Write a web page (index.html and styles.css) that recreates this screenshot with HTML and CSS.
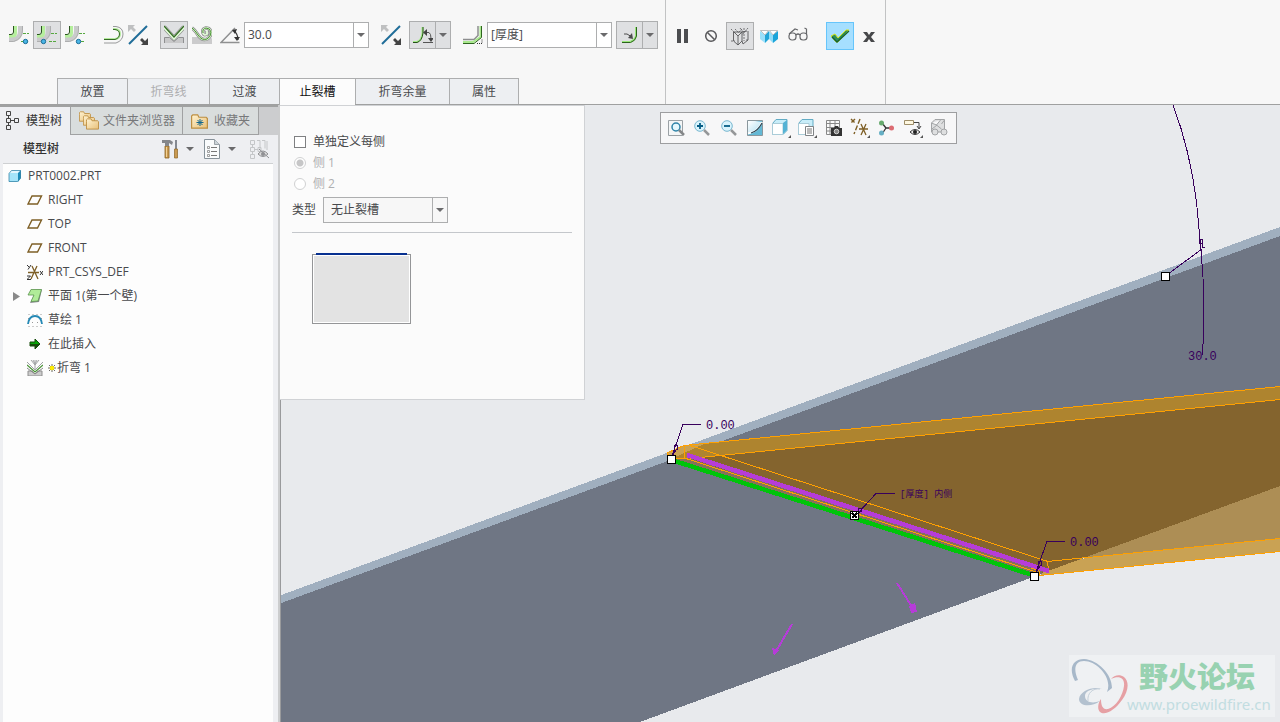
FILE: index.html
```html
<!DOCTYPE html>
<html lang="zh-CN">
<head>
<meta charset="utf-8">
<meta name="viewport" content="width=device-width, initial-scale=1">
<title>PRT0002.PRT</title>
<link rel="stylesheet" href="styles.css">
</head>
<body>
<svg class="defs" aria-hidden="true">
  <defs>
    <linearGradient id="gold" x1="0" y1="0" x2="1" y2="1"><stop offset="0" stop-color="#fff3d2"/><stop offset="1" stop-color="#e8c079"/></linearGradient>
    <linearGradient id="glass" x1="0" y1="0" x2="1" y2="1"><stop offset="0" stop-color="#fff"/><stop offset="1" stop-color="#a8dcf0"/></linearGradient>
    <symbol id="caret" viewBox="0 0 8 4"><path d="M0 0h8L4 4z" fill="#6a6a6c"/></symbol>
    <symbol id="bend" viewBox="0 0 20 20">
      <path d="M9 1h5v4q0 9-9 12H0v-5h3q6 0 6-6z" fill="#c9cacb"/>
      <path d="M13.500 1v4q0 9-9 11.500H0" fill="none" stroke="#adaeaf"/>
      <path d="M6.500 1v7q0 3-3 3H0" fill="none" stroke="#b5ef9c" stroke-width="3"/>
      <path d="M4.500 1v6q0 2.500-2.500 2.500H0" fill="none" stroke="#2c5420"/>
      <path d="M14 8.500h6M12 16.500h8" stroke="#57a840" stroke-dasharray="3 1"/>
    </symbol>
    <symbol id="flip" viewBox="0 0 20 20">
      <path d="M1 19 19 1" stroke="#1f6d98" stroke-width="2"/>
      <path d="M0 0h7L5 2l3 3-2 2-3-3-3 3z" fill="#bfc0c1"/>
      <path d="M20 20h-7l2-2-3-3 2-2 3 3 3-3z" fill="#444"/>
    </symbol>
    <symbol id="plane" viewBox="0 0 16 16"><path d="M5 4h9.500l-4 8H1z" fill="none" stroke="#7e5f26" stroke-width="1.400"/></symbol>
    <symbol id="folder" viewBox="0 0 14 12"><path d="M.5 3.500v-2l1-1h4l1 2h6l1 1v8H.5z" fill="url(#gold)" stroke="#bd8f42"/></symbol>
  </defs>
</svg>
<div class="app">
  <header class="ribbon">
    <section class="ribbon-main">
      <div class="tools">
        <button class="tool" aria-label="外侧折弯"><svg class="i20"><use href="#bend"/><circle cx="16.500" cy="16.500" r="2.200" fill="#4ab5e6" stroke="#1b6d97"/></svg></button>
        <button class="tool on" aria-label="中间折弯"><svg class="i20"><use href="#bend"/><circle cx="6.500" cy="16.500" r="2.200" fill="#4ab5e6" stroke="#1b6d97"/></svg></button>
        <button class="tool" aria-label="内侧折弯"><svg class="i20"><use href="#bend"/><circle cx="13.500" cy="16.500" r="2.200" fill="#4ab5e6" stroke="#1b6d97"/></svg></button>
        <button class="tool group" aria-label="固定侧"><svg class="i20" viewBox="0 0 20 20"><path d="M9 1.500h3q7 1 7 7.500t-7 9H0" fill="none" stroke="#98999a"/><path d="M9 4h2q5 .5 5 5t-5 5H0" fill="none" stroke="#b4eb9c" stroke-width="2"/><path d="M9 4.500h2q4.500 .5 4.500 4.500t-4.500 5.500H0" fill="none" stroke="#356a25"/></svg></button>
        <button class="tool tight" aria-label="更改固定侧"><svg class="i20"><use href="#flip"/></svg></button>
        <button class="tool on next" aria-label="角度折弯"><svg class="i20" viewBox="0 0 20 20"><path d="M.5 18v-5.500h5l4.500 4 4.500-4h5V18" fill="#c8c8c9" stroke="#8e8f90"/><path d="m0 2 10 11L20 2" fill="none" stroke="#8d8f8e" stroke-width="4.500"/><path d="m0 2 10 11L20 2" fill="none" stroke="#e5ffda" stroke-width="3"/><path d="m0 1 10 11L20 1" fill="none" stroke="#356a25" stroke-width="1.300"/></svg></button>
        <button class="tool" aria-label="滚动折弯"><svg class="i20" viewBox="0 0 20 20"><path d="M0 12h6q5 7 14 1v6H0z" fill="#cbcbcc"/><path d="M0 3q3 2 6 7 4 6 9 4 4-2 4-7-1-4-5-4-4 1-3 5 1 3 4 1V6" fill="none" stroke="#8b8d8c" stroke-width="3.500"/><path d="M0 3q3 2 6 7 4 6 9 4 4-2 4-7-1-4-5-4-4 1-3 5 1 3 4 1V6" fill="none" stroke="#dff6d5" stroke-width="2"/><path d="M0 3q3 2 6 7 4 6 9 4 4-2 4-7-1-4-5-4-4 1-3 5" fill="none" stroke="#499332"/></svg></button>
        <label class="tool" for="angle" title="折弯角度"><svg class="i20" viewBox="0 0 20 20"><path d="M19.500 17.500H1L15 3" fill="none" stroke="#8f9091" stroke-width="1.500"/><path d="M14 6q4 3 4 9" fill="none" stroke="#333" stroke-width="1.200"/><path d="m12 5 5-1-2 5zM14 12l3 4 3-4z" fill="#333"/></svg></label>
        <div class="combo"><input id="angle" type="text" value="30.0"><button class="drop" aria-label="角度列表"><svg class="caret"><use href="#caret"/></svg></button></div>
        <button class="tool next" aria-label="反向角度"><svg class="i20"><use href="#flip"/></svg></button>
        <div class="split"><button class="half" aria-label="角度标注"><svg class="i20" viewBox="0 0 20 20"><path d="M9.500 2v6q-1 8-6 9H0" fill="none" stroke="#a4ea88" stroke-width="2"/><path d="M10 2v6q-1 8-6 9.500H0" fill="none" stroke="#264f1b"/><path d="M10 17.500h10M13 7.500h3q2 1 2 6" fill="none" stroke="#555"/><path d="m14 4-4 3.500 4 3.500zM15 13h6l-3 4z" fill="#444"/></svg></button><button class="drop" aria-label="更多角度选项"><svg class="caret"><use href="#caret"/></svg></button></div>
        <label class="tool next" for="radius" title="折弯半径"><svg class="i20" viewBox="0 0 20 20"><path d="M0 14.500h11l4-4V1" fill="none" stroke="#8d8e8f" stroke-width="1.500"/><path d="M0 17h10l7.500-5V1" fill="none" stroke="#a9e98d" stroke-width="2"/><path d="M0 18.500h11l7.500-6V1" fill="none" stroke="#2f6520"/><path d="M14 18.500h5V14" fill="none" stroke="#333" stroke-dasharray="1 1"/></svg></label>
        <div class="combo"><input id="radius" type="text" value="[厚度]"><button class="drop" aria-label="半径列表"><svg class="caret"><use href="#caret"/></svg></button></div>
        <div class="split"><button class="half" aria-label="标注折弯"><svg class="i20" viewBox="0 0 20 20"><path d="M16 2v9q-1 4-6 6H2" fill="none" stroke="#9ae67a" stroke-width="2"/><path d="M16.500 2v9q-1 5-6 6.500H2" fill="none" stroke="#2c641d"/><path d="M4 9h3l5 3" fill="none" stroke="#4c4c4c"/><path d="m8 13 5 1-1-6z" fill="#4c4c4c"/></svg></button><button class="drop" aria-label="更多标注选项"><svg class="caret"><use href="#caret"/></svg></button></div>
      </div>
      <nav class="tabs">
        <button class="tab w70">放置</button>
        <button class="tab w82" disabled>折弯线</button>
        <button class="tab w70">过渡</button>
        <button class="tab w76 current">止裂槽</button>
        <button class="tab w94">折弯余量</button>
        <button class="tab w70">属性</button>
      </nav>
    </section>
    <section class="ribbon-actions">
      <button class="tool" aria-label="暂停"><svg class="i20" viewBox="0 0 20 20"><path d="M5 3h4v14H5zM12 3h4v14h-4z" fill="#4c4d50"/></svg></button>
      <button class="tool" aria-label="无预览"><svg class="i20" viewBox="0 0 20 20"><circle cx="10" cy="10" r="5.300" fill="none" stroke="#58585b" stroke-width="1.500"/><path d="m6.500 6.500 7 7" stroke="#58585b" stroke-width="1.500"/></svg></button>
      <button class="tool on" aria-label="分离预览"><svg class="i20" viewBox="0 0 20 20" fill="none" stroke="#58585a"><path d="M3.500 6v9L8 19l4-4 1 3 5-4V5M3.500 6H12L8 10v9M12 6l5-1M12 6v9M8 10 4 6" stroke-width=".9"/><path d="M1 3l4 4M5 3l3 3M12 3 8 7M14 2v13M10 2l4 5M18 2l-6 7M1 15h4M16 14h3" stroke-width=".8" stroke-dasharray="2 1"/></svg></button>
      <button class="tool" aria-label="连接预览"><svg class="i20" viewBox="0 0 20 20"><path d="m1 5 5 4v8l-5-4z" fill="#9be0fa"/><path d="m6 9 4-4v8l-4 4z" fill="#22a5d7"/><path d="m10 5 4 4v8l-4-4z" fill="#8edcf8"/><path d="m14 9 5-4v8l-5 4z" fill="#1ba4d9"/><path d="M1.500 4.500h8L6 9zm9 0h8L14 9z" fill="#fff" stroke="#a2a6a8" stroke-width=".7"/></svg></button>
      <button class="tool" aria-label="验证"><svg class="i20" viewBox="0 0 20 20" fill="none" stroke="#67686b" stroke-width="1.200"><rect x="1" y="7" width="7" height="7" rx="3"/><rect x="12" y="7" width="7" height="7" rx="3"/><path d="M8 9q2-2 4 0M1 8l6-5 3 1M18.500 8V3l-2-1"/></svg></button>
      <button class="tool ok" aria-label="确定"><svg class="i20" viewBox="0 0 20 20"><path d="m1 10 4-2 3 4 8-8h3L8 16H6z" fill="#2f8f57" stroke="#d9e51b"/><path d="M2 11 7 16 19 5" fill="none" stroke="#126034" stroke-width="1.300"/></svg></button>
      <button class="tool" aria-label="取消"><svg class="i20" viewBox="0 0 20 20"><path d="M4 6h4l2 3 2-3h4l-4 5 4 5h-4l-2-3-2 3H4l4-5z" fill="#47484a"/></svg></button>
    </section>
  </header>
  <main class="work">
    <aside class="side">
      <nav class="side-tabs">
        <button class="side-tab first"><svg class="i16" viewBox="0 0 16 20" fill="none" stroke="#444"><path d="M2.500.5h4v4h-4zM2.500 7.500h4v4h-4zM2.500 14.500h4v4h-4zM10.500 7.500h4v4h-4zM4.500 4.500v3M4.500 11.500v3M6.500 9.500h4"/></svg>模型树</button>
        <button class="side-tab second"><svg class="i20" viewBox="0 0 20 20"><use href="#folder" width="12" height="11" x="0" y="0"/><use href="#folder" width="12" height="11" x="4" y="4"/><use href="#folder" width="13" height="12" x="7" y="7"/></svg>文件夹浏览器</button>
        <button class="side-tab third"><svg class="i18" viewBox="0 0 18 18"><use href="#folder" width="17" height="15" x="0" y="2"/><path d="M9 7v7M5.500 10.500h7M6.500 8l5 5m0-5-5 5" stroke="#12678f"/></svg>收藏夹</button>
      </nav>
      <div class="side-bar">
        <h2>模型树</h2>
        <button class="mini" aria-label="设置"><svg class="i20" viewBox="0 0 20 20"><path d="M5 7h4v12H5z" fill="#c99950" stroke="#8e6524" stroke-width=".8"/><path d="M6.500 8v10" stroke="#f3d397"/><path d="M2 1h8l3 2-1 3-3-2v3H5V4H2z" fill="#85878b"/><path d="M16 1v9" stroke="#626770" stroke-width="1.500"/><path d="M14.500 10h3v9h-3z" fill="#c99950" stroke="#8e6524" stroke-width=".7"/></svg><svg class="caret"><use href="#caret"/></svg></button>
        <button class="mini" aria-label="显示"><svg class="i20" viewBox="0 0 20 20"><path d="M2.500.5h10l5 5v14h-15z" fill="#f9fbfc" stroke="#87929a"/><path d="M12.500.5v5h5" fill="#ccd4d9" stroke="#9aa2a8"/><path d="M9 8.500h6M9 12.500h6M9 16.500h6" stroke="#777"/><path d="M5.500 7.500h2v2h-2zM5.500 11.500h2v2h-2zM5.500 15.500h2v2h-2z" fill="none" stroke="#888" stroke-width=".8"/></svg><svg class="caret"><use href="#caret"/></svg></button>
        <button class="mini last" aria-label="隐藏" disabled><svg class="i20" viewBox="0 0 20 20" fill="none"><path d="M1.500 1.500h4v4h-4zM1.500 8.500h4v4h-4zM1.500 15.500h4v4h-4zM3.500 5v3M3.500 12v3M6 10.500h3M8 1.500h3v8M13 1.500h3v8M18 2v9M9 8.500h3v4H9z" stroke="#c4c6c8"/><path d="M9 15q5-6 10 0-5 5-10 0z" fill="#ddd" stroke="#909194"/><circle cx="14" cy="15" r="2" fill="#909194"/><path d="m10 10 10 9" stroke="#909194"/></svg></button>
      </div>
      <ul class="tree">
        <li class="root"><svg class="i16" viewBox="0 0 16 16"><path d="M2 5h9v9H2z" fill="#a5e5fa"/><path d="m2 5 3-3h9l-3 3z" fill="#e3f8ff"/><path d="m11 5 3-3v8l-3 4z" fill="#1b8cb9"/><path d="m2 5.500 2.500-3H13.500V10l-3 3.500H2z" fill="none" stroke="#3a87a8" stroke-width=".8"/></svg>PRT0002.PRT</li>
        <li><svg class="i16"><use href="#plane"/></svg>RIGHT</li>
        <li><svg class="i16"><use href="#plane"/></svg>TOP</li>
        <li><svg class="i16"><use href="#plane"/></svg>FRONT</li>
        <li><svg class="i16" viewBox="0 0 16 16" fill="none"><path d="M1 8.500h11M5 2l6 13M10 2 4 15" stroke="#7e5f26" stroke-width="1.300"/><path d="m0 1 2 2m2-2L1 5.500M0 12h3.500L0 15.500h4M13 7l3 4m0-4-3 4" stroke="#333"/></svg>PRT_CSYS_DEF</li>
        <li class="branch"><svg class="twist" viewBox="0 0 7 9"><path d="M0 0v9l7-4.500z" fill="#8a8a8a"/></svg><svg class="i16" viewBox="0 0 16 16"><path d="m4 2 11-.5L12 14l-9 1 1-2 3-6-5-1z" fill="#85888b"/><path d="M4 1.500h10.500L11 13l-7 .5L7 7H1z" fill="#b0ec98" stroke="#5d9650" stroke-width=".8"/></svg>平面 1(第一个壁)</li>
        <li><svg class="i16" viewBox="0 0 16 16"><path d="M1.500 2.500h13M1.500 14.500h13M1.500 6v7M14.500 6v7M5.500 10v4M10.500 10v4" stroke="#999" stroke-dasharray="1 3"/><path d="M1 12q1-8 7-8t7 8" fill="none" stroke="#2589b5" stroke-width="1.800"/></svg>草绘 1</li>
        <li><svg class="i16" viewBox="0 0 16 16"><path d="M3 6h5V3l5 5-5 5v-3H3z" fill="#08a508" stroke="#174b0b"/><path d="M3 8h10l-5 5v-3H3z" fill="#174b0b"/></svg>在此插入</li>
        <li><svg class="i16" viewBox="0 0 16 16"><path d="M1 16v-5h4l3 3 3-3h4v5z" fill="#ccc" stroke="#8f8f8f"/><path d="m4 0 4 5 4-5M6 0l2 4 2-4M8 0v9M0 2l8 8 8-8" fill="none" stroke="#a0a2a4"/><path d="m0 5 8 7 8-7" fill="none" stroke="#499336" stroke-width="1.300"/><path d="m0 8 8 6 8-6" fill="none" stroke="#888"/></svg><svg class="spark" viewBox="0 0 8 8"><path d="M4 0v8M0 4h8M1 1l6 6m0-6L1 7" stroke="#444" stroke-width=".8"/><circle cx="4" cy="4" r="2.300" fill="#ffed00"/></svg>折弯 1</li>
      </ul>
    </aside>
    <section class="view">
      <svg class="scene" viewBox="280 105 1000 617" preserveAspectRatio="xMidYMid slice" shape-rendering="crispEdges">
        <path d="M280 595.500 1280 227v259L640 722H280z" fill="#a0afbf"/>
        <path d="M280 603.500 1280 236v250L640 722H280z" fill="#6f7684"/>
        <path d="M1280 480V540L1086 558 1048 562z" fill="#ad8e55"/>
        <path d="M1048 568 1086 558 1280 539V551L1040 575z" fill="#c9a254"/>
        <path d="M667 453 684 445 1280 386V486L1048 571 1034 575 671 459z" fill="#84642e"/>
        <path d="M667 453 684 445 1280 386V399L700 457 671 459z" fill="#ae842f"/>
        <path d="M667 453 684 445 706 443 671 459z" fill="#c9a254"/>
        <path d="M673 459 688 458 1046 571 1034 575z" fill="#85705b"/>
        <g fill="none" stroke="#ffa000">
          <path d="M667 453 684 445.500 1280 386.500M690 458.500 1280 399.500M684 445v13M667 453l4 6 17-1M690 445.500 1048 561.500M686 458.500 1038 572.500M1047 561.500 1280 538.500M1034 576 1280 551.500M1047 561l2 10M1031 568l8 3v4"/>
        </g>
        <path d="m687 455 362 116" stroke="#b63cd8" stroke-width="4.500"/>
        <path d="m673 460.500 361 115" stroke="#00c40a" stroke-width="4.500"/>
        <g stroke="#b63cd8" stroke-width="2" fill="#b63cd8">
          <path d="m897 583 15 24M792 624l-17 29"/><path d="m909 606 6-3 2 9-6 1zM772 648l7 2-5 6z" stroke="none"/>
        </g>
        <g fill="none" stroke="#38005c">
          <path d="M701 424.500H683L672 456M674 446l3-1 1 4-4 2zM676 450l-3 5M895 493.500H876L858 513M858 509l3-1 1 3-4 2zM1065 541.500H1047L1036 572M1038 562l3-1 1 4-4 2zM1040 566l-3 5"/>
          <path d="M1173 105Q1190 150 1196.500 202L1201 250 1203 277 1203.500 334 1202.500 355M1168 274 1202 249M1199.500 239.500h3v4h-3zM1202 247h3M1202.500 243v4"/>
        </g>
        <g fill="#fff" stroke="#000">
          <path d="M667.500 455.500h8v8h-8zM1030.500 572.500h8v8h-8zM1161.500 272.500h8v8h-8zM850.500 511.500h8v8h-8z"/>
          <path d="m852 513 5 5m0-5-5 5" stroke-width="1.500"/>
        </g>
        <g class="dim">
          <text x="706" y="429">0.00</text>
          <text x="1070" y="546">0.00</text>
          <text x="1188" y="360">30.0</text>
          <text x="900" y="497" class="note">[厚度] 内侧</text>
        </g>
      </svg>
      <div class="view-tools">
        <button aria-label="重新调整"><svg class="i18" viewBox="0 0 18 18"><path d="M1.500 1.500h14v15h-14z" fill="#f4f6f7" stroke="#9ba1a5"/><circle cx="9" cy="8" r="4" fill="#e5f7fd" stroke="#2e83a8" stroke-width="1.500"/><path d="m12 11 5 5" stroke="#858789" stroke-width="2.500"/></svg></button>
        <button aria-label="放大"><svg class="i18" viewBox="0 0 18 18"><circle cx="7" cy="7" r="5.300" fill="#d9f3fc" stroke="#79b7d0"/><path d="M7 4v6M4 7h6" stroke="#075e86" stroke-width="1.800"/><path d="m11 11 5 5" stroke="#959799" stroke-width="2.500"/></svg></button>
        <button aria-label="缩小"><svg class="i18" viewBox="0 0 18 18"><circle cx="7" cy="7" r="5.300" fill="#d9f3fc" stroke="#79b7d0"/><path d="M4 7h6" stroke="#075e86" stroke-width="1.800"/><path d="m11 11 5 5" stroke="#959799" stroke-width="2.500"/></svg></button>
        <button aria-label="重画"><svg class="i18" viewBox="0 0 18 18"><path d="M1.500 1.500h15v15h-15z" fill="#63b8d5" stroke="#8a979d"/><path d="M2 2h7l7 1Q13 12 2 15z" fill="url(#glass)"/><path d="M2 14.500Q12 13 16 3" fill="none" stroke="#fff" stroke-width="2"/><path d="M5 14q7-2 11-10" fill="none" stroke="#294553" stroke-width="1.200"/></svg></button>
        <button aria-label="显示样式"><svg class="i20" viewBox="0 0 20 20"><path d="M1.500 5.500 5 1.500h11v11l-4 4H1.500z" fill="#c8edf9" stroke="#63acc5"/><path d="M1.500 5.500H12v11H1.500z" fill="#fff" stroke="#aaccd8"/><path d="m12 5 4-3v10l-4 4z" fill="#54b2d4"/><path d="M20 17v3h-3z" fill="#555"/></svg></button>
        <button aria-label="已保存方向"><svg class="i20" viewBox="0 0 20 20"><path d="M1.500 5.500 5 1.500h11v11l-4 4H1.500z" fill="#c8edf9" stroke="#63acc5"/><path d="M1.500 5.500H12v11H1.500z" fill="#fff" stroke="#aaccd8"/><path d="M8.500 8.500h8v9h-8z" fill="#fff" stroke="#808386"/><path d="M10 11h5M10 13h5M10 15h5" stroke="#777"/><path d="M20 17v3h-3z" fill="#555"/></svg></button>
        <button aria-label="视图管理器"><svg class="i18" viewBox="0 0 18 18"><path d="M1.500 1.500h13v14h-13zM5 1v14M10 1v7M1 4.500h13M1 8.500h13M1 12h6" fill="#fafafa" stroke="#888"/><path d="M6 9h3l1-2h3l1 2h3v8H6z" fill="#333"/><circle cx="11.500" cy="12.500" r="2.300" fill="#888" stroke="#fff" stroke-width=".7"/></svg></button>
        <button aria-label="基准显示"><svg class="i20" viewBox="0 0 20 20"><path d="m1 1 4 4m0-4L1 5M10 1 4 16" fill="none" stroke="#7e5f26" stroke-width="1.400" stroke-dasharray="5 2"/><path d="M9 11h9M11 6l5 11M16 6l-5 11" stroke="#7e5f26" stroke-width="1.300"/><path d="M20 17v3h-3z" fill="#555"/></svg></button>
        <button aria-label="旋转中心"><svg class="i18" viewBox="0 0 18 18"><path d="m5 4 4 5h7M9 9l-4 6" fill="none" stroke="#333" stroke-width="1.300"/><circle cx="4.500" cy="4" r="2.500" fill="#68aa6f"/><circle cx="14.500" cy="9" r="2.500" fill="#dc6b72"/><circle cx="4.500" cy="14" r="2.500" fill="#66afc4"/></svg></button>
        <button aria-label="注释显示"><svg class="i20" viewBox="0 0 20 20"><path d="M1.500 2.500h9v4h-9z" fill="#fff8e1" stroke="#9d8d68"/><path d="M11 4.500h5V10M14 8l2 3 2-3" fill="none" stroke="#444"/><path d="M7 14q5-5 10 0-5 5-10 0z" fill="#eee" stroke="#333"/><circle cx="12" cy="14" r="2" fill="#222"/><path d="M20 17v3h-3z" fill="#555"/></svg></button>
        <button aria-label="外观" disabled><svg class="i20" viewBox="0 0 20 20" fill="#dedfe0" stroke="#a2a4a6"><path d="M2.500 5 6 1.500h9.500V11l-3 3h-10zM2.500 5l5 2 4-5M7.500 7l5 4M3 11l5-4M12.500 6l3-4"/><circle cx="6" cy="14" r="3"/><circle cx="15" cy="14" r="3"/></svg></button>
      </div>
      <form class="panel">
        <label class="choice"><input type="checkbox">单独定义每侧</label>
        <label class="choice off"><input type="radio" name="side" checked disabled>侧 1</label>
        <label class="choice off"><input type="radio" name="side" disabled>侧 2</label>
        <div class="field"><label for="relief">类型</label><div class="select-wrap"><select id="relief"><option>无止裂槽</option></select><span class="select-arrow"><svg class="caret"><use href="#caret"/></svg></span></div></div>
        <hr>
        <div class="preview"></div>
      </form>
      <div class="brand">
        <svg class="rings" viewBox="0 0 60 62" fill="none">
          <path fill-rule="evenodd" fill="#a7b8c9" d="M6 26C-1 13 4 4 15 4c14 1 28 15 28 29l-5 4C44 23 28 6 15 6 6 6 4 14 9 25z"/>
          <path fill-rule="evenodd" fill="#e6a0a4" d="M42 24c3-4 9-5 13-2 6 5 4 15-2 23-7 10-17 16-22 12-3-3-2-9 1-13 0 7 2 11 7 10 8-2 15-14 16-23 1-8-5-11-13-7z"/>
          <path fill="#b3c1cf" d="M33 34c-9-3-22 2-23 10 0 7 12 9 21 2-8 3-15 1-15-5 0-5 7-8 17-7z"/>
          <path d="M19 46c-1-8 5-13 12-12" stroke="#c5d0da"/>
        </svg>
        <div class="brand-text"><strong>野火论坛</strong><span>www.proewildfire.cn</span></div>
      </div>
    </section>
  </main>
</div>
</body>
</html>
```
FILE: styles.css
```css
* { box-sizing: border-box; }
body {
  margin: 0;
  font: 12px/16px "Open Sans", "Noto Sans CJK SC", sans-serif;
  color: #48494c;
  background: #f7f7f7;
}
button, input, select { font: inherit; color: inherit; }
button { margin: 0; padding: 0; border: 0; background: none; }
svg { display: block; flex: none; }
.defs { position: absolute; width: 0; height: 0; }
.i20 { width: 20px; height: 20px; }
.i18 { width: 18px; height: 18px; }
.i16 { width: 16px; height: 16px; }
.caret { width: 8px; height: 4px; }

.app { display: flex; flex-direction: column; min-height: 100vh; }
.ribbon { display: flex; border-bottom: 1px solid #9fa0a0; }
.ribbon-main {
  display: flex;
  flex-direction: column;
  width: 666px;
  padding-top: 21px;
  border-right: 1px solid #c2c3c4;
}
.tools { display: flex; align-items: center; padding-left: 5px; margin-bottom: 29px; }
.tool {
  display: flex;
  align-items: center;
  justify-content: center;
  width: 28px;
  height: 28px;
  border: 1px solid transparent;
}
.on { background: #dfe0e2; border-color: #adaeaf; }
.group { margin-left: 11px; }
.tight { margin-left: -4px; }
.next { margin-left: 8px; }
.combo { display: flex; width: 125px; height: 26px; border: 1px solid #adaeaf; background: #fff; }
.combo input { flex: 1; min-width: 0; padding: 0 3px; border: 0; outline: 0; background: none; }
.drop { display: flex; align-items: center; justify-content: center; width: 15px; border-left: 1px solid #adaeaf; }
.split { display: flex; width: 42px; height: 28px; border: 1px solid #adaeaf; background: #dfe0e2; margin-left: 4px; }
.half { display: flex; flex: 1; align-items: center; justify-content: center; }
.tabs { display: flex; padding-left: 57px; }
.tab {
  height: 26px;
  border: 1px solid #adaeaf;
  border-right-width: 0;
  border-bottom: 0;
  background: #edeff2;
}
.tab:last-child { border-right-width: 1px; }
.tab:disabled { color: #adaeb0; border-top-color: #d7d8d9; }
.w70 { width: 70px; }
.w76 { width: 76px; }
.w82 { width: 82px; }
.w94 { width: 94px; }
.current { background: #fcfcfc; color: #111; margin-bottom: -1px; height: 27px; }
.ribbon-actions { display: flex; gap: 1px; width: 220px; padding: 22px 0 0 2px; border-right: 1px solid #c2c3c4; }
.ok { background: #a6dfff; border-color: #66c5fb; margin-left: 13px; }

.work { display: flex; flex: 1; }
.side { display: flex; flex-direction: column; width: 280px; border-right: 2px solid #cccdce; background: #eeeff2; }
.side-tabs { display: flex; height: 30px; background: #cccdcf; border-top: 2px solid #a0a1a1; }
.side-tab {
  display: flex;
  align-items: center;
  gap: 4px;
  border-right: 1px solid #a0a1a2;
  border-bottom: 1px solid #a0a1a2;
  background: #d9dddd;
  color: #77787a;
  white-space: nowrap;
}
.side-tab svg { height: 20px; }
.first { width: 71px; padding-left: 4px; gap: 6px; background: #eeeff2; color: #333; border-bottom: 0; }
.second { width: 112px; padding-left: 8px; }
.third { width: 76px; padding-left: 8px; gap: 5px; }
.side-bar { display: flex; align-items: center; height: 28px; padding: 0 9px 0 23px; gap: 8px; }
h2 { margin: 0; flex: 1; font-size: 12px; line-height: 16px; font-weight: 500; color: #333; }
.mini { display: flex; align-items: center; gap: 6px; }
.last { margin-left: 5px; }
.tree {
  flex: 1;
  margin: 0 5px 0 3px;
  padding: 0;
  list-style: none;
  border-top: 1px solid #ced0d2;
  background: #fdfdfd;
}
.tree li { display: flex; align-items: center; gap: 5px; height: 24px; padding-left: 24px; }
.tree .root { padding-left: 4px; }
.tree .branch { padding-left: 10px; }
.twist { width: 7px; height: 9px; margin-right: 2px; }
.spark { width: 8px; height: 16px; margin-right: -4px; }

.view { position: relative; flex: 1; min-width: 0; background: #e8eaed; overflow: hidden; }
.scene { position: absolute; inset: 0; width: 100%; height: 100%; border-left: 0; }
.view::before { content: ""; position: absolute; z-index: 1; inset: 0 auto 0 0; width: 1px; background: #999a9c; }
.dim { font: 12px "Liberation Mono", "Noto Sans CJK SC", monospace; fill: #38005c; }
.note { font-size: 9px; }
.view-tools {
  position: absolute;
  top: 7px;
  left: 380px;
  display: flex;
  width: 297px;
  height: 32px;
  padding: 0 4px 0 2px;
  border: 1px solid #9d9ea0;
  background: #f7f7f8;
}
.view-tools button { display: flex; flex: 1; align-items: center; justify-content: center; }
.panel {
  position: absolute;
  z-index: 2;
  top: 0;
  left: 0;
  width: 305px;
  min-height: 295px;
  padding: 25px 12px 12px;
  border: 1px solid #d0d2d5;
  border-left: 0;
  background: #fbfbfb;
}
.choice { display: flex; align-items: center; height: 21px; gap: 7px; padding-left: 2px; }
.choice input { appearance: none; width: 12px; height: 12px; margin: 0; border: 1px solid #7f8082; background: #fff; }
.choice input[type="radio"] { border-radius: 50%; border-color: #d0d1d2; }
.choice input[type="radio"]:checked { background: radial-gradient(circle, #c6c6c7 0 3px, #fff 4px); }
.off { color: #aeafb1; }
.field { display: flex; align-items: center; gap: 7px; margin-top: 3px; }
.select-wrap { display: flex; position: relative; width: 125px; height: 26px; border: 1px solid #adaeaf; background: #f7f7f7; }
.select-wrap select { appearance: none; width: 100%; padding: 0 20px 0 7px; border: 0; background: none; }
.select-arrow {
  position: absolute;
  inset: 0 0 0 auto;
  display: flex;
  align-items: center;
  justify-content: center;
  width: 15px;
  border-left: 1px solid #adaeaf;
  pointer-events: none;
}
hr { margin: 9px 0 21px; border: 0; border-top: 1px solid #c4c7cb; }
.preview { position: relative; width: 99px; height: 70px; margin-left: 20px; border: 1px solid #949597; background: #e3e3e3; box-shadow: inset 0 0 0 1px #fff; }
.preview::before { content: ""; position: absolute; top: -2px; left: 3px; right: 3px; height: 2px; background: #073090; }
.brand {
  position: absolute;
  right: 5px;
  bottom: 5px;
  display: flex;
  width: 206px;
  height: 62px;
  background: #eff1f3;
}
.rings { width: 60px; height: 62px; }
.brand-text { display: flex; flex-direction: column; margin-left: -2px; white-space: nowrap; }
.brand-text strong { padding-left: 12px; font: 900 29px/40px "Noto Sans CJK SC", sans-serif; color: #98d2b1; }
.brand-text span { font: 15px/18px "Noto Sans", sans-serif; color: #c2dde1; }
```
